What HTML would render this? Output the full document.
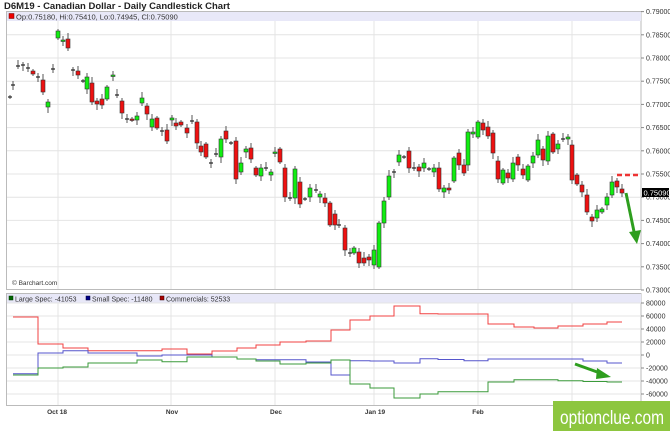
<!DOCTYPE html>
<html><head><meta charset="utf-8"><style>
body{margin:0;width:670px;height:431px;overflow:hidden;background:#fff;font-family:"Liberation Sans",sans-serif}
svg text{font-family:"Liberation Sans",sans-serif}
</style></head><body>
<svg id="s" width="670" height="431" xmlns="http://www.w3.org/2000/svg">
<rect x="0" y="0" width="670" height="431" fill="#fff"/>
<text x="4" y="9" font-size="9.5" font-weight="bold" fill="#222">D6M19 - Canadian Dollar - Daily Candlestick Chart</text>
<rect x="6.5" y="11.5" width="634.5" height="278" fill="#fff" stroke="#bbb"/>
<rect x="7" y="12" width="634" height="9" fill="#e8e8f8"/>
<rect x="9" y="13.5" width="5" height="5" fill="#e00" stroke="#600" stroke-width="0.5"/>
<text x="16" y="19.5" font-size="7.5" fill="#333">Op:0.75180, Hi:0.75410, Lo:0.74945, Cl:0.75090</text>
<g id="grid1" stroke="#e4e4e4" stroke-width="1"></g>
<g id="cand"></g>
<text x="12" y="285" font-size="6.5" fill="#333">© Barchart.com</text>
<rect x="6.5" y="293.5" width="634.5" height="112" fill="#fff" stroke="#bbb"/>
<rect x="7" y="294" width="634" height="9" fill="#e8e8f8"/>
<rect x="9" y="296" width="4" height="4" fill="#060" stroke="#030" stroke-width="0.5"/>
<text x="15" y="301.5" font-size="7" fill="#333">Large Spec: -41053</text>
<rect x="86" y="296" width="4" height="4" fill="#008" stroke="#003" stroke-width="0.5"/>
<text x="92" y="301.5" font-size="7" fill="#333">Small Spec: -11480</text>
<rect x="160" y="296" width="4" height="4" fill="#a00" stroke="#300" stroke-width="0.5"/>
<text x="166" y="301.5" font-size="7" fill="#333">Commercials: 52533</text>
<g id="grid2" stroke="#e4e4e4" stroke-width="1"></g>
<g id="lines" fill="none" stroke-width="1"></g>
<g id="axis" font-size="7" fill="#333"></g>
<line x1="617" y1="175" x2="641" y2="175" stroke="#e33" stroke-width="2.5" stroke-dasharray="5,3"/>
<rect x="642" y="188" width="27" height="9" fill="#000"/>
<text x="643.5" y="195.5" font-size="7.5" fill="#fff">0.75090</text>
<line x1="626" y1="193" x2="634.5" y2="234" stroke="#2e9e1e" stroke-width="3"/>
<polygon points="629,232 641,230 637,244" fill="#2e9e1e"/>
<line x1="575" y1="364" x2="600" y2="373" stroke="#2e9e1e" stroke-width="3"/>
<polygon points="597,368 611,377 596,379" fill="#2e9e1e"/>
<rect x="553" y="401" width="117" height="30" fill="#8dc63f"/>
<text x="560" y="424" font-size="19" fill="#fff" textLength="104" lengthAdjust="spacingAndGlyphs">optionclue.com</text>
</svg>
<script>
var NS="http://www.w3.org/2000/svg";
function el(p,t,a,tx){var e=document.createElementNS(NS,t);for(var k in a)e.setAttribute(k,a[k]);if(tx)e.textContent=tx;document.getElementById(p).appendChild(e);return e;}
var vx=[58,171,275,374,478,572];
vx.forEach(function(x){el('grid1','line',{x1:x,y1:21,x2:x,y2:289});});
var prices=["0.79000","0.78500","0.78000","0.77500","0.77000","0.76500","0.76000","0.75500","0.75000","0.74500","0.74000","0.73500","0.73000"];
prices.forEach(function(p,i){var y=11.6+i*23.2;if(i>0&&i<12)el('grid1','line',{x1:7,y1:y,x2:641,y2:y});el('axis','line',{x1:641,y1:y,x2:644,y2:y,stroke:'#888'});el('axis','text',{x:646,y:y+2.5},p);});
vx.forEach(function(x){el('grid2','line',{x1:x,y1:303,x2:x,y2:405});});
var vals=["80000","60000","40000","20000","0","-20000","-40000","-60000"];
vals.forEach(function(v,i){var y=303+i*13;el('grid2','line',{x1:7,y1:y,x2:641,y2:y});el('axis','line',{x1:641,y1:y,x2:644,y2:y,stroke:'#888'});el('axis','text',{x:646,y:y+2.5},v);});
[["Oct 18",57],["Nov",172],["Dec",276],["Jan 19",375],["Feb",478]].forEach(function(d){el('axis','text',{x:d[1],y:414,'text-anchor':'middle','font-weight':'bold','font-size':'6.5'},d[0]);});
var C=[[10,97,97,'d'],[13,85,85,'d'],[18,66,66,'d'],[23,65,65,'d'],[28,68,68,'d'],[33,71,74,'r'],[38,77,77,'d'],[43,80,92,'r'],[48,102,107,'g'],[53,69,69,'d'],[58,31,38,'g'],[63,40,41,'g'],[68,39,48,'r'],[73,70,70,'d'],[78,71,75,'r'],[83,81,81,'d'],[87,77,89,'g'],[92,83,102,'r'],[97,101,104,'r'],[102,99,105,'r'],[107,87,99,'g'],[113,75,76,'g'],[117,95,95,'d'],[122,101,113,'r'],[127,119,119,'d'],[132,119,120,'r'],[137,116,120,'g'],[142,98,103,'g'],[147,106,114,'r'],[152,119,127,'g'],[157,118,128,'r'],[162,131,131,'d'],[167,130,141,'r'],[172,118,120,'g'],[176,123,126,'r'],[181,122,125,'r'],[187,128,133,'r'],[192,121,121,'d'],[197,122,143,'r'],[201,146,152,'r'],[206,144,157,'r'],[211,163,163,'d'],[216,154,154,'d'],[221,139,157,'g'],[226,131,139,'r'],[231,143,143,'d'],[236,141,179,'r'],[241,163,172,'g'],[246,149,152,'g'],[251,148,159,'r'],[256,168,175,'r'],[261,168,176,'g'],[266,168,168,'d'],[271,172,175,'g'],[275,152,153,'g'],[280,149,162,'r'],[285,168,197,'r'],[290,198,198,'d'],[295,169,198,'g'],[300,182,204,'r'],[305,199,199,'d'],[310,188,197,'g'],[316,190,190,'d'],[320,194,197,'g'],[325,198,203,'r'],[330,203,225,'r'],[335,214,225,'r'],
[339,225,225,'d'],[345,228,250,'r'],[350,253,253,'d'],[354,248,253,'g'],[359,252,263,'r'],[364,258,263,'r'],[369,257,260,'r'],[374,250,265,'g'],[379,223,267,'g'],[384,201,223,'g'],[389,176,197,'g'],[394,172,172,'d'],[399,155,162,'g'],[404,157,157,'d'],[409,151,168,'r'],[414,168,168,'d'],[419,167,171,'r'],[424,163,168,'g'],[429,169,169,'d'],[434,168,172,'g'],[439,168,189,'r'],[444,188,192,'g'],[449,188,190,'r'],[454,158,181,'g'],[459,153,165,'r'],[464,165,173,'r'],[468,132,165,'g'],[473,132,134,'g'],[478,122,137,'g'],[483,123,130,'r'],[488,127,136,'r'],[493,133,153,'r'],[498,161,179,'r'],[503,170,183,'g'],[508,173,178,'r'],[513,163,179,'g'],[518,157,165,'r'],[523,169,175,'r'],[528,166,180,'g'],[533,156,163,'g'],[538,140,155,'g'],[543,149,160,'r'],[548,136,161,'g'],[553,134,152,'r'],[558,144,149,'g'],[563,139,139,'d'],[568,137,139,'g'],[572,145,180,'r'],[577,175,184,'r'],[582,185,192,'r'],[587,195,212,'r'],[592,217,221,'r'],[597,210,218,'g'],[602,209,212,'g'],[607,197,205,'g'],[612,182,195,'g'],[617,181,187,'r'],[622,189,193,'r']];
C.forEach(function(c,i){var x=c[0],t=c[1],b=c[2];var w1=t-2-(i*7%5),w2=b+2+(i*3%5);
el('cand','line',{x1:x,y1:w1,x2:x,y2:w2,stroke:'#555','stroke-width':1});
if(c[3]=='d'){el('cand','line',{x1:x-2,y1:t,x2:x+2,y2:t,stroke:'#222','stroke-width':1.2});}
else{el('cand','rect',{x:x-2,y:t,width:4,height:Math.max(b-t,1.5),fill:c[3]=='g'?'#11ee11':'#ee1111',stroke:'#333','stroke-width':0.6});}});
function step(pts,col){var d="M13,"+pts[0][1];for(var i=1;i<pts.length;i++){d+=" H"+pts[i][0]+" V"+pts[i][1];}d+=" H622";el('lines','path',{d:d,stroke:col});}
step([[7,317],[38,344],[63,348],[88,350.7],[162,349],[187,354],[212,351],[237,348],[256,345],[280,342],[306,341],[331,330],[350,320],[370,316],[394,306],[420,313.7],[438,314],[488,324],[514,327],[534,328],[558,326],[583,324],[607,322]],'#f04040');
step([[7,373.7],[38,353],[63,350.7],[88,353],[137,356],[162,355],[212,357],[237,359],[256,359.7],[306,362],[331,375],[350,360.7],[370,361],[394,363],[420,358.7],[438,359.5],[464,360.7],[488,359],[583,361],[607,363]],'#5555cc');
step([[7,375],[38,368],[63,367],[88,363],[137,360],[162,361.7],[187,357],[237,359],[256,361],[280,364],[306,363],[331,360],[350,384],[370,388],[394,398],[420,394],[438,391.7],[488,382],[514,379.7],[558,380.7],[583,381.5],[607,382]],'#3a9a3a');
</script>
</body></html>
